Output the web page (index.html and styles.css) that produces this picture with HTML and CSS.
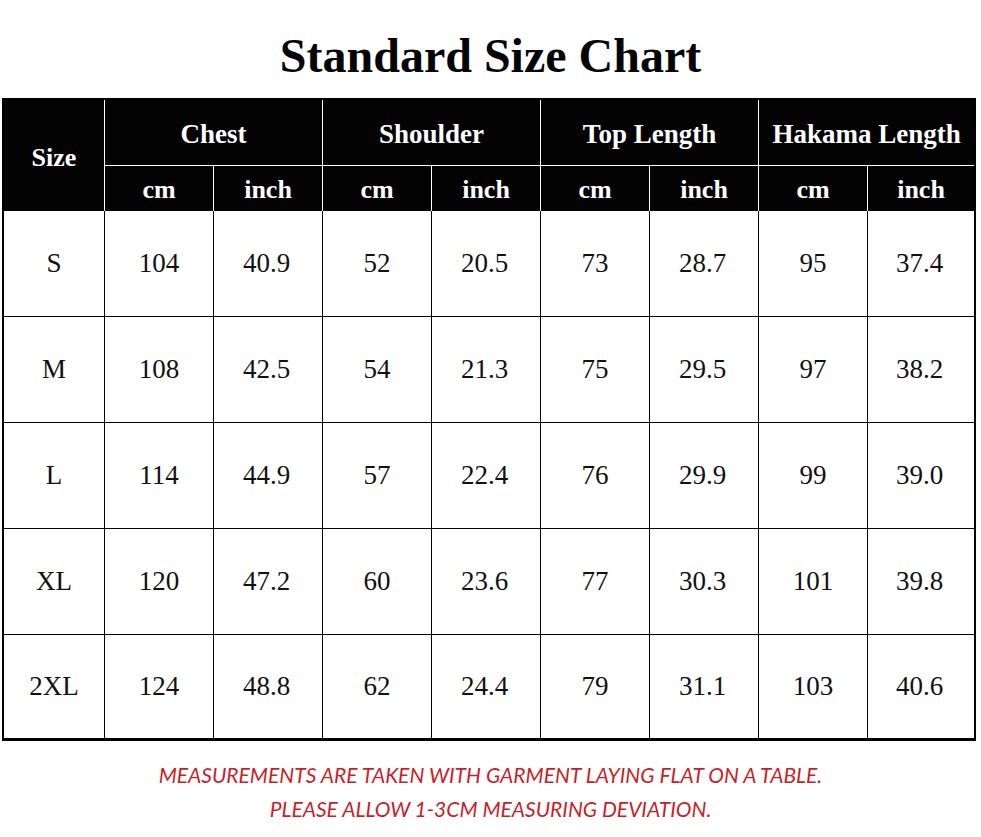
FILE: index.html
```html
<!DOCTYPE html>
<html lang="en">
<head>
<meta charset="utf-8">
<title>Standard Size Chart</title>
<link rel="stylesheet" href="styles.css">
</head>
<body>
<main class="chart">
  <h1 class="title">Standard Size Chart</h1>
  <table class="sizes">
    <colgroup>
      <col class="c-size">
      <col class="c-val"><col class="c-val">
      <col class="c-val"><col class="c-val">
      <col class="c-val"><col class="c-val">
      <col class="c-val"><col class="c-last">
    </colgroup>
    <thead>
      <tr class="h1">
        <th rowspan="2" class="size-head">Size</th>
        <th colspan="2">Chest</th>
        <th colspan="2">Shoulder</th>
        <th colspan="2">Top Length</th>
        <th colspan="2" class="last">Hakama Length</th>
      </tr>
      <tr class="h2">
        <th>cm</th><th>inch</th>
        <th>cm</th><th>inch</th>
        <th>cm</th><th>inch</th>
        <th>cm</th><th class="last">inch</th>
      </tr>
    </thead>
    <tbody>
      <tr><td>S</td><td>104</td><td class="in">40.9</td><td>52</td><td class="in">20.5</td><td>73</td><td class="in">28.7</td><td>95</td><td class="in last">37.4</td></tr>
      <tr><td>M</td><td>108</td><td class="in">42.5</td><td>54</td><td class="in">21.3</td><td>75</td><td class="in">29.5</td><td>97</td><td class="in last">38.2</td></tr>
      <tr><td>L</td><td>114</td><td class="in">44.9</td><td>57</td><td class="in">22.4</td><td>76</td><td class="in">29.9</td><td>99</td><td class="in last">39.0</td></tr>
      <tr><td>XL</td><td>120</td><td class="in">47.2</td><td>60</td><td class="in">23.6</td><td>77</td><td class="in">30.3</td><td>101</td><td class="in last">39.8</td></tr>
      <tr class="end"><td>2XL</td><td>124</td><td class="in">48.8</td><td>62</td><td class="in">24.4</td><td>79</td><td class="in">31.1</td><td>103</td><td class="in last">40.6</td></tr>
    </tbody>
  </table>
  <p class="note">MEASUREMENTS ARE TAKEN WITH GARMENT LAYING FLAT ON A TABLE.<br>PLEASE ALLOW 1-3CM MEASURING DEVIATION.</p>
</main>
</body>
</html>
```

FILE: styles.css
```css
html, body {
  margin: 0;
  padding: 0;
  background: #fff;
}

.chart {
  width: 981px;
  height: 837px;
  overflow: hidden;
}

.title {
  margin: 28px 0 14px;
  height: 56px;
  line-height: 56px;
  text-align: center;
  font-family: "Liberation Serif", "Times New Roman", serif;
  font-weight: bold;
  font-size: 48px;
  color: #050505;
}

.sizes {
  margin-left: 2px;
  width: 974px;
  table-layout: fixed;
  border-collapse: separate;
  border-spacing: 0;
  border: 2px solid #000;
  border-bottom-width: 3px;
  font-family: "Liberation Serif", "Times New Roman", serif;
}

.c-size { width: 101px; }
.c-val { width: 109px; }
.c-last { width: 106px; }

.sizes th,
.sizes td {
  box-sizing: border-box;
  padding: 0;
  text-align: center;
  vertical-align: middle;
}

.sizes th {
  background: #030303;
  color: #fff;
  font-weight: bold;
  font-size: 26px;
  border-right: 1px solid #fff;
}

.h1 th {
  height: 66px;
  font-size: 27px;
  border-bottom: 1px solid #fff;
  padding-top: 4px;
}

.h1 th.size-head {
  border-bottom: none;
  font-size: 26px;
  padding-top: 4px;
}

.h2 th {
  height: 45px;
  padding-top: 3px;
}

.sizes th.last,
.sizes td.last {
  border-right: none;
}

.sizes td {
  height: 106px;
  font-size: 27px;
  color: #111;
  border-right: 1px solid #000;
  border-bottom: 1px solid #000;
}

.sizes td.in {
  padding-right: 3px;
}

.sizes tr.end td {
  height: 103px;
  border-bottom: none;
}

.note {
  margin: 17px 0 0;
  text-align: center;
  font-family: "Lato", "Open Sans", sans-serif;
  font-style: italic;
  font-size: 21px;
  line-height: 34px;
  color: #c81e28;
}
```
